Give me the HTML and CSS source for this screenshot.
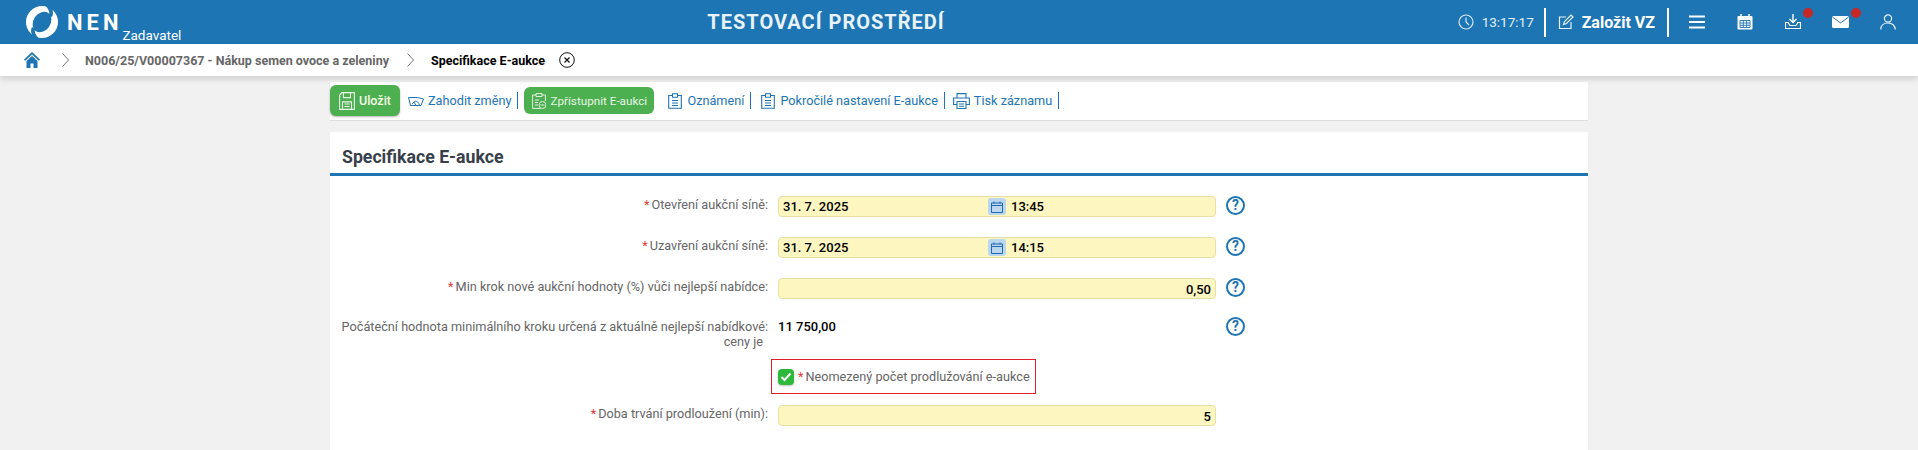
FILE: index.html
```html
<!DOCTYPE html>
<html lang="cs">
<head>
<meta charset="utf-8">
<title>Specifikace E-aukce</title>
<link rel="stylesheet" href="styles.css">
</head>
<body>
<header class="topbar">
  <div class="brand">
    <svg class="logo" viewBox="0 0 32 32" width="32" height="32">
      <circle cx="16" cy="16" r="16" fill="#fff"/>
      <ellipse cx="16" cy="16" rx="8.5" ry="11" transform="rotate(35 16 16)" fill="#1e75b3"/>
      <path d="M19 -1 Q25 6 22.500 9 L26 11 Q29 5 23 -1 Z" fill="#1e75b3"/>
      <path d="M13 33 Q7 26 9.500 23 L6 21 Q3 27 9 33 Z" fill="#1e75b3"/>
    </svg>
    <span class="brand-name">NEN</span>
    <span class="brand-role">Zadavatel</span>
  </div>
  <div class="env">TESTOVACÍ PROSTŘEDÍ</div>
  <div class="tools">
    <svg class="ico clock" viewBox="0 0 16 16" width="16" height="16"><circle cx="8" cy="8" r="7" fill="none" stroke="#d6e8f5" stroke-width="1.2"/><path d="M8 3.500V8l3 3" fill="none" stroke="#d6e8f5" stroke-width="1.2"/></svg>
    <span class="time">13:17:17</span>
    <span class="vsep"></span>
    <svg class="ico pen" viewBox="0 0 16 16" width="16" height="16"><path d="M8 3H1.500v11.500H13V8" fill="none" stroke="#e6f1f9" stroke-width="1.2"/><path d="M5.500 10.500l1-3L13 1l2 2-6.500 6.500z" fill="none" stroke="#e6f1f9" stroke-width="1.200"/></svg>
    <span class="create">Založit VZ</span>
    <span class="vsep"></span>
    <svg class="ico burger" viewBox="0 0 16 14" width="16" height="14"><path d="M0 1.500h16M0 7h16M0 12.500h16" stroke="#fff" stroke-width="2"/></svg>
    <svg class="ico cal" viewBox="0 0 16 16" width="16" height="16"><rect x="0.500" y="2" width="15" height="13.500" rx="1" fill="#fff"/><path d="M4 0v3M12 0v3" stroke="#fff" stroke-width="1.500"/><path d="M3 6.500h10v7H3zM6.300 6.500v7M9.700 6.500v7M3 9h10M3 11.300h10" fill="none" stroke="#1e75b3" stroke-width=".9"/></svg>
    <span class="notify">
      <svg class="ico" viewBox="0 0 16 16" width="16" height="16"><path d="M8 0v8M4.500 5L8 8.500 11.500 5" fill="none" stroke="#fff" stroke-width="1.400"/><path d="M4 8.500H.5v6h15v-6H12" fill="none" stroke="#fff" stroke-width="1.200"/><path d="M3 8.500 5 11.500h6l2-3" fill="none" stroke="#fff" stroke-width="1.200"/></svg>
      <span class="dot"></span>
    </span>
    <span class="notify mail">
      <svg class="ico" viewBox="0 0 17 12" width="17" height="12"><rect width="17" height="12" rx="1.500" fill="#fff"/><path d="M0.500 1 8.500 7 16.500 1" fill="none" stroke="#1e75b3" stroke-width="1"/></svg>
      <span class="dot"></span>
    </span>
    <svg class="ico user" viewBox="0 0 16 16" width="16" height="16"><circle cx="8" cy="4.500" r="3.600" fill="none" stroke="#e6f1f9" stroke-width="1.200"/><path d="M.8 15.500c0-4 3-6.500 7.200-6.500s7.200 2.500 7.200 6.500" fill="none" stroke="#e6f1f9" stroke-width="1.200"/></svg>
  </div>
</header>

<nav class="crumbs">
  <svg class="home" viewBox="0 0 16 16" width="16" height="16"><path d="M8 0 0 7.500l1.200 1.300L8 2.500l6.800 6.300L16 7.500z" fill="#1e75b3"/><path d="M8 4 2.500 9v7H6.500v-4.500h3V16H13.500V9z" fill="#1e75b3"/></svg>
  <svg class="chev first" viewBox="0 0 7 14" width="7" height="14"><path d="M.5.500 6.500 7 .5 13.500" fill="none" stroke="#777" stroke-width="1"/></svg>
  <a class="crumb">N006/25/V00007367 - Nákup semen ovoce a zeleniny</a>
  <svg class="chev" viewBox="0 0 7 14" width="7" height="14"><path d="M.5.500 6.500 7 .5 13.500" fill="none" stroke="#777" stroke-width="1"/></svg>
  <strong class="crumb-current">Specifikace E-aukce</strong>
  <svg class="close" viewBox="0 0 16 16" width="16" height="16"><circle cx="8" cy="8" r="7.300" fill="none" stroke="#111" stroke-width="1"/><path d="M5.500 5.500l5 5M10.500 5.500l-5 5" stroke="#111" stroke-width="1.200"/></svg>
</nav>

<main class="page">
  <div class="toolbar">
    <button class="btn btn-save">
      <svg viewBox="0 0 16 18" width="16" height="18"><path d="M.6 3 3 .6h12.400v16.800H.6z" fill="none" stroke="#eaf6ea" stroke-width="1.100"/><path d="M4.500.6v5h7v-5M3.500 17.400v-7.500h9v7.500M5.500 12h5M5.500 14.500h5" fill="none" stroke="#eaf6ea" stroke-width="1.100"/></svg>
      Uložit
    </button>
    <a class="tool tool-discard">
      <svg viewBox="0 0 16 10" width="16" height="10"><path d="M.5 1.500h9l6 1.500-2.500 6.500H2.500zM8 9.500 6 6l-2 2M6 6c2-1.500 4-1 5.500 3" fill="none" stroke="#1e75b3" stroke-width="1"/></svg>
      Zahodit změny
    </a>
    <span class="tsep"></span>
    <button class="btn btn-open">
      <svg viewBox="0 0 14 16" width="14" height="16"><path d="M4 2H.6v13.400h8M10 2h3.400v6M4 .6h6V3.500H4z" fill="none" stroke="#e3f3e3" stroke-width="1"/><path d="M3 7h4M3 9.500h3M3 12h3" stroke="#e3f3e3" stroke-width="1"/><circle cx="10.500" cy="12" r="3.500" fill="none" stroke="#e3f3e3" stroke-width="1"/><path d="M8.500 12h4" stroke="#e3f3e3"/></svg>
      Zpřístupnit E-aukci
    </button>
    <a class="tool tool-note">
      <svg class="clip" viewBox="0 0 14 16" width="14" height="16"><path d="M4 2.500H.7v12.800h12.600V2.500H10M4.500.7h5v3.500h-5zM4 7.500h6M4 10h6M4 12.500h6" fill="none" stroke="#1e75b3" stroke-width="1.100"/></svg>
      Oznámení
    </a>
    <span class="tsep"></span>
    <a class="tool tool-adv">
      <svg class="clip" viewBox="0 0 14 16" width="14" height="16"><path d="M4 2.500H.7v12.800h12.600V2.500H10M4.500.7h5v3.500h-5zM4 7.500h6M4 10h6M4 12.500h6" fill="none" stroke="#1e75b3" stroke-width="1.100"/></svg>
      Pokročilé nastavení E-aukce
    </a>
    <span class="tsep"></span>
    <a class="tool tool-print">
      <svg viewBox="0 0 17 16" width="17" height="16"><path d="M4 5V.6h9V5M4 11.500H.6V5h15.800v6.500H13M4 8.500h9v7H4zM6 11h5M6 13.300h5" fill="none" stroke="#1e75b3" stroke-width="1.100"/></svg>
      Tisk záznamu
    </a>
    <span class="tsep"></span>
  </div>

  <section class="card">
    <h1 class="card-title">Specifikace E-aukce</h1>
    <form class="form">
      <div class="row">
        <label class="lbl"><span class="req">*</span>Otevření aukční síně<span class="colon">:</span></label>
        <div class="field field-date"><span class="dt">31. 7. 2025</span><span class="cal-btn"><svg viewBox="0 0 12 12" width="12" height="12"><path d="M.5 2h11v9.500H.5zM.5 4.500h11M3 .5v2M9 .5v2" fill="none" stroke="#1e6ab3" stroke-width="1"/></svg></span><span class="tm">13:45</span></div>
        <span class="help">?</span>
      </div>
      <div class="row">
        <label class="lbl"><span class="req">*</span>Uzavření aukční síně<span class="colon">:</span></label>
        <div class="field field-date"><span class="dt">31. 7. 2025</span><span class="cal-btn"><svg viewBox="0 0 12 12" width="12" height="12"><path d="M.5 2h11v9.500H.5zM.5 4.500h11M3 .5v2M9 .5v2" fill="none" stroke="#1e6ab3" stroke-width="1"/></svg></span><span class="tm">14:15</span></div>
        <span class="help">?</span>
      </div>
      <div class="row">
        <label class="lbl"><span class="req">*</span>Min krok nové aukční hodnoty (%) vůči nejlepší nabídce<span class="colon">:</span></label>
        <div class="field field-num">0,50</div>
        <span class="help">?</span>
      </div>
      <div class="row row-static">
        <label class="lbl">Počáteční hodnota minimálního kroku určená z aktuálně nejlepší nabídkové<span class="colon">:</span> ceny je</label>
        <div class="value">11 750,00</div>
        <span class="help">?</span>
      </div>
      <div class="row row-check">
        <div class="check-box">
          <span class="check"><svg viewBox="0 0 12 10" width="12" height="10"><path d="M1.500 5 4.500 8 10.500 1.500" fill="none" stroke="#fff" stroke-width="2"/></svg></span>
          <span class="check-label"><span class="req">*</span>Neomezený počet prodlužování e-aukce</span>
        </div>
      </div>
      <div class="row">
        <label class="lbl"><span class="req">*</span>Doba trvání prodloužení (min)<span class="colon">:</span></label>
        <div class="field field-num">5</div>
      </div>
    </form>
  </section>
</main>
</body>
</html>
```
FILE: styles.css
```css
* { box-sizing: border-box; }
html, body { margin: 0; height: 450px; overflow: hidden; }
body { background: #f1f1f1; font-family: Roboto, "Liberation Sans", sans-serif; font-size: 12.7px; color: #666; }
svg { display: block; flex: none; }

.topbar { height: 44px; background: #1e75b3; color: #fff; display: flex; align-items: center; position: relative; }
.brand { display: flex; align-items: flex-start; height: 44px; padding: 6px 0 0 26px; }
.brand-name { font-size: 22px; font-weight: 700; letter-spacing: 4px; line-height: 34px; margin-left: 9px; }
.brand-role { font-size: 13.5px; line-height: 16px; margin: 21px 0 0 0; }
.env { position: absolute; left: 0; right: 266px; text-align: center; font-size: 20px; font-weight: 700; letter-spacing: 1px; color: #e8f2f9; }
.tools { margin-left: auto; display: flex; align-items: center; padding-right: 22px; }
.clock { margin-right: 8px; }
.time { width: 50px; font-size: 13.5px; color: #e0eef8; margin-right: 12px; white-space: nowrap; }
.vsep { width: 2px; height: 29px; background: #fff; }
.pen { margin: 0 8px 0 12px; }
.create { font-size: 16px; font-weight: 700; margin-right: 12px; white-space: nowrap; }
.burger { margin: 0 32px 0 20px; }
.notify { position: relative; display: block; }
.cal { margin-right: 32px; }
.mail { margin-left: 31px; }
.user { margin-left: 31px; }
.dot { position: absolute; width: 10px; height: 10px; border-radius: 50%; background: #c62828; top: -6px; right: -12px; }
.mail .dot { top: -8px; right: -12px; }

.crumbs { height: 32px; background: #fff; display: flex; align-items: center; padding-left: 24px; box-shadow: 0 3px 6px rgba(0,0,0,.14); position: relative; }
.crumb { margin-left: 16px; font-size: 12.5px; font-weight: 700; color: #666; }
.crumbs .chev { margin-left: 18px; }
.crumbs .chev.first { margin-left: 22px; }
.crumb-current { margin-left: 17px; font-size: 12.5px; color: #000; }
.close { margin-left: 14px; }

.page { width: 1258px; margin: 6px auto 0; }
.toolbar { height: 39px; background: #fff; border-bottom: 1px solid #ddd; display: flex; align-items: center; padding-bottom: 1px; }
.btn { border: 0; background: #4caf50; color: #f4fbe9; font-family: inherit; display: flex; align-items: center; border-radius: 6px; padding: 0; white-space: nowrap; }
.btn-save { width: 70px; height: 31px; font-size: 12.5px; font-weight: 500; gap: 4px; padding-left: 9px; box-shadow: 0 1px 2px rgba(0,0,0,.3); }
.btn-open { width: 130px; height: 27px; font-size: 11.7px; gap: 4px; padding-left: 8px; margin-left: 6px; color: #e8f5e9; }
.tool { display: flex; align-items: center; gap: 5px; color: #1e75b3; font-size: 12.7px; white-space: nowrap; }
.tool-discard { margin-left: 8px; gap: 4px; }
.tool-note { margin-left: 14px; }
.tool-adv { margin-left: 10px; }
.tool-print { margin-left: 8px; gap: 4px; }
.tsep { width: 1px; height: 17px; background: #1e75b3; margin-left: 6px; }

.card { background: #fff; margin-top: 11px; height: 318px; }
.card-title { margin: 0; height: 44px; border-bottom: 3px solid #1e75b3; padding: 15px 0 0 12px; font-size: 17.7px; line-height: 21px; font-weight: 700; color: #37404a; }
.form { padding-top: 20px; }
.row { display: grid; grid-template-columns: 438px 438px 19px; column-gap: 10px; align-items: start; margin-bottom: 20px; }
.lbl { text-align: right; padding: 1px 5px 0 0; line-height: 16px; color: #666; }
.colon { margin-right: -5px; }
.req { color: #e53935; margin-right: 2px; }
.field { height: 21px; background: #fdf6c0; border: 1px solid #e6dfa6; border-radius: 4px; font-size: 13px; font-weight: 500; color: #000; line-height: 21px; padding: 0 4px; }
.field-date { display: flex; align-items: center; }
.dt { width: 65px; white-space: nowrap; }
.cal-btn { width: 18px; height: 17px; background: #bcd6ee; border-radius: 3px; display: flex; align-items: center; justify-content: center; margin-left: 140px; }
.tm { margin-left: 5px; }
.field-num { text-align: right; }
.help { width: 19px; height: 19px; border: 2px solid #1e75b3; border-radius: 50%; color: #1e75b3; font-size: 14px; font-weight: 700; line-height: 15px; text-align: center; }
.row-static { margin-bottom: 10px; margin-top: -2px; }
.row-static .lbl { padding-top: 2px; line-height: 15px; }
.row-static .value { font-size: 13px; font-weight: 500; color: #000; line-height: 15px; padding-top: 2px; }
.row-check { display: block; margin-bottom: 11px; }
.check-box { margin-left: 441px; width: 265px; height: 35px; border: 1px solid #e01f2d; display: flex; align-items: center; padding-left: 6px; }
.check { width: 16px; height: 16px; border-radius: 4px; background: #2fb93a; display: flex; align-items: center; justify-content: center; box-shadow: 0 1px 2px rgba(0,0,0,.25); }
.check-label { margin-left: 4px; color: #666; white-space: nowrap; }
```
